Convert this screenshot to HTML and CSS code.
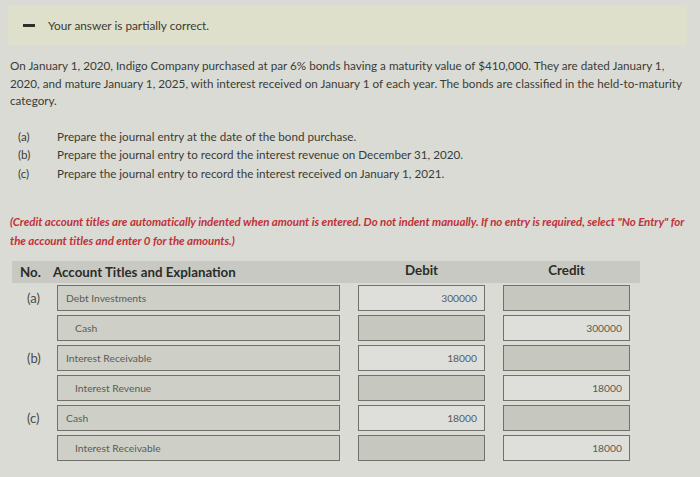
FILE: index.html
```html
<!DOCTYPE html>
<html>
<head>
<meta charset="utf-8">
<link rel="stylesheet" href="styles.css">
</head>
<body>
<div class="banner"><span class="dash"></span><span class="banner-text">Your answer is partially correct.</span></div>

<p class="intro">On January 1, 2020, Indigo Company purchased at par 6% bonds having a maturity value of $410,000. They are dated January 1, 2020, and mature January 1, 2025, with interest received on January 1 of each year. The bonds are classified in the held-to-maturity category.</p>

<div class="tasks">
  <span class="tl">(a)</span><span>Prepare the journal entry at the date of the bond purchase.</span>
  <span class="tl">(b)</span><span>Prepare the journal entry to record the interest revenue on December 31, 2020.</span>
  <span class="tl">(c)</span><span>Prepare the journal entry to record the interest received on January 1, 2021.</span>
</div>

<p class="note">(Credit account titles are automatically indented when amount is entered. Do not indent manually. If no entry is required, select "No Entry" for the account titles and enter 0 for the amounts.)</p>

<div class="journal">
  <div class="head">
    <span class="h-no">No.</span>
    <span class="h-acct">Account Titles and Explanation</span>
    <span class="h-amt">Debit</span>
    <span class="h-amt">Credit</span>
  </div>
  <div class="rows">
    <span class="lbl">(a)</span>
    <div class="box acct">Debt Investments</div>
    <div class="box amt filled">300000</div>
    <div class="box amt"></div>

    <span class="lbl"></span>
    <div class="box acct ind">Cash</div>
    <div class="box amt"></div>
    <div class="box amt filled">300000</div>

    <span class="lbl">(b)</span>
    <div class="box acct">Interest Receivable</div>
    <div class="box amt filled">18000</div>
    <div class="box amt"></div>

    <span class="lbl"></span>
    <div class="box acct ind">Interest Revenue</div>
    <div class="box amt"></div>
    <div class="box amt filled">18000</div>

    <span class="lbl">(c)</span>
    <div class="box acct">Cash</div>
    <div class="box amt filled">18000</div>
    <div class="box amt"></div>

    <span class="lbl"></span>
    <div class="box acct ind">Interest Receivable</div>
    <div class="box amt"></div>
    <div class="box amt filled">18000</div>
  </div>
</div>
</body>
</html>
```

FILE: styles.css
```css
html, body {
  margin: 0;
  padding: 0;
}
body {
  background: #dadbd4;
  font-family: Lato, "Open Sans", sans-serif;
  color: #3c3d38;
  width: 700px;
  height: 477px;
  overflow: hidden;
}
.banner {
  margin: 5px 13px 0 8px;
  height: 40px;
  background: #dfe0cc;
  display: flex;
  align-items: center;
  padding-left: 15px;
}
.dash {
  width: 12px;
  height: 3px;
  background: #2e2f2a;
  margin-right: 13px;
}
.banner-text {
  font-size: 11.8px;
  color: #3a3b33;
}
.intro {
  margin: 12px 7px 0 10px;
  font-size: 11.7px;
  line-height: 17.5px;
  color: #3a3b36;
}
.tasks {
  display: grid;
  grid-template-columns: 39px auto;
  row-gap: 1.5px;
  margin: 18px 0 0 18px;
  font-size: 11.65px;
  line-height: 17px;
  color: #3a3b36;
}
.note {
  margin: 30px 4px 0 10px;
  font-size: 11.5px;
  line-height: 19px;
  font-style: italic;
  font-weight: bold;
  color: #c0323a;
  letter-spacing: -0.05px;
}
.journal {
  margin: 11px 0 0 12px;
  width: 628px;
}
.head {
  display: grid;
  grid-template-columns: 27px 283px 127px 127px;
  column-gap: 18px;
  background: #c8c9c2;
  height: 22px;
  align-items: center;
  font-size: 13.3px;
  font-weight: bold;
  color: #2b2c28;
}
.h-no {
  padding-left: 8px;
}
.h-acct {
  margin-left: -4px;
  white-space: nowrap;
}
.h-amt {
  text-align: center;
  margin-top: -4px;
}
.rows {
  display: grid;
  grid-template-columns: 27px 283px 127px 127px;
  column-gap: 18px;
  row-gap: 4px;
  margin-top: 2px;
}
.lbl {
  font-size: 13px;
  color: #4a4b45;
  padding-left: 15px;
  align-self: center;
  white-space: nowrap;
}
.box {
  height: 24px;
  border: 1px solid #6f716a;
  box-sizing: content-box;
  display: flex;
  align-items: center;
  font-size: 10.3px;
  color: #5a5b55;
  background: #c6c8c0;
}
.acct {
  background: #ced0c8;
  padding-left: 8px;
  width: 273px;
}
.acct.ind {
  padding-left: 17px;
  width: 264px;
}
.amt {
  width: 125px;
  justify-content: flex-end;
}
.amt.filled {
  background: #dedfda;
  padding-right: 7px;
  width: 118px;
}
```
